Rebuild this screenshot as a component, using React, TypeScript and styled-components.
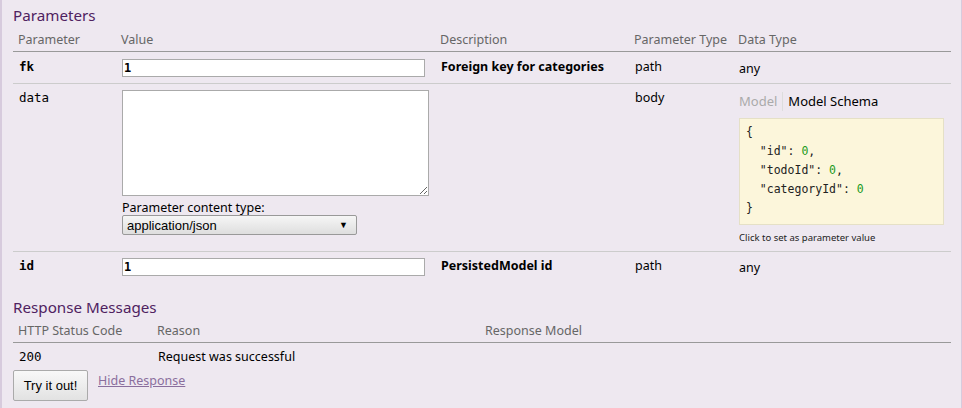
import React from "react";
import styled, { createGlobalStyle } from "styled-components";

const Global = createGlobalStyle`
  html, body { margin: 0; padding: 0; }
  body {
    background: #eee8f0;
    font-family: "Noto Sans", "Open Sans", sans-serif;
    font-size: 12.5px;
    color: #000;
  }
`;

const Panel = styled.div`
  box-sizing: border-box;
  width: 962px;
  height: 408px;
  border-left: 2px solid #d7cbdd;
  border-right: 1px solid #d7cbdd;
  padding: 4px 10px 0 11px;
  overflow: hidden;
`;

const Heading = styled.h4`
  margin: 0;
  font-size: 15.2px;
  font-weight: 400;
  color: #4f2260;
  line-height: 22px;
`;

const Table = styled.table`
  width: 100%;
  border-collapse: collapse;
  table-layout: fixed;
`;

const Th = styled.th<{ $w?: number; $top?: number }>`
  box-sizing: border-box;
  ${(p) => (p.$w ? `width: ${p.$w}px;` : "")}
  text-align: left;
  font-weight: 400;
  color: #666;
  font-size: 12.5px;
  white-space: nowrap;
  padding: ${(p) => p.$top ?? 5}px 0 3px 5px;
  border-bottom: 1px solid #999;
  line-height: 17px;
`;

const Td = styled.td<{ $bold?: boolean; $last?: boolean; $pad?: number }>`
  vertical-align: top;
  padding: ${(p) => p.$pad ?? 6}px 6px 6px 6px;
  line-height: 15px;
  font-size: 12.5px;
  white-space: nowrap;
  font-weight: ${(p) => (p.$bold ? 700 : 400)};
  border-bottom: ${(p) => (p.$last ? "none" : "1px solid #ccc")};
`;

const MonoName = styled.span<{ $bold?: boolean }>`
  font-family: "DejaVu Sans Mono", "Liberation Mono", monospace;
  font-size: 12.5px;
  font-weight: ${(p) => (p.$bold ? 700 : 400)};
`;

const Lowered = styled.span`
  display: inline-block;
  padding-top: 2px;
`;

const TextInput = styled.input`
  box-sizing: border-box;
  display: block;
  width: 303px;
  height: 18px;
  margin: 0;
  border: 1px solid #aaa;
  background: #fff;
  padding: 0 0 0 1px;
  font-family: "DejaVu Sans Mono", monospace;
  font-weight: 700;
  font-size: 12px;
  color: #000;
  outline: none;
`;

const TextArea = styled.textarea`
  box-sizing: border-box;
  display: block;
  width: 307px;
  height: 106px;
  margin: 0;
  border: 1px solid #aaa;
  background: #fff;
  resize: both;
  outline: none;
`;

const Label = styled.div`
  font-size: 12.5px;
  line-height: 14px;
  margin-top: 5px;
`;

const Select = styled.div`
  box-sizing: border-box;
  width: 235px;
  height: 20px;
  border: 1px solid #999;
  border-radius: 2px;
  background: linear-gradient(#f6f6f6, #dedede);
  display: flex;
  align-items: center;
  justify-content: space-between;
  padding: 0 8px 0 4px;
  font-family: "Liberation Sans", Arial, sans-serif;
  font-size: 13px;
`;

const Arrow = styled.span`
  font-size: 9px;
`;

const Tabs = styled.div`
  display: flex;
  align-items: center;
  margin-top: 2px;
  font-size: 13px;
`;

const Tab = styled.span<{ $active?: boolean }>`
  color: ${(p) => (p.$active ? "#000" : "#aaa")};
  padding: ${(p) => (p.$active ? "0 0 0 5px" : "0 5px 0 0")};
  line-height: 19px;
  ${(p) => (!p.$active ? "border-right: 1px solid #ddd;" : "")}
`;

const Snippet = styled.pre`
  box-sizing: border-box;
  width: 205px;
  margin: 7px 0 0 0;
  background: #fcf6db;
  border: 1px solid #e5e0c6;
  padding: 4px 6px 6px 6px;
  font-family: "DejaVu Sans Mono", monospace;
  font-size: 11.5px;
  line-height: 19px;
  color: #222;
`;

const Num = styled.span`
  color: #1b9a1b;
`;

const Hint = styled.div`
  font-size: 9.5px;
  line-height: 14px;
  margin-top: 6px;
  color: #222;
`;

const SecondHeading = styled(Heading)`
  margin-top: 14px;
`;

const Actions = styled.div`
  display: flex;
  align-items: flex-start;
  gap: 10px;
`;

const Button = styled.button`
  box-sizing: border-box;
  width: 75px;
  height: 31px;
  margin: 0;
  border: 1px solid #aaa;
  border-radius: 2px;
  background: linear-gradient(#f8f8f8, #e2e2e2);
  font-family: "Liberation Sans", Arial, sans-serif;
  font-size: 13px;
  color: #000;
  padding: 0;
`;

const Link = styled.a`
  color: #8a6e9d;
  text-decoration: underline;
  font-size: 12.5px;
  line-height: 16px;
  margin-top: 3px;
`;

export default function App() {
  return (
    <>
      <Global />
      <Panel>
        <Heading>Parameters</Heading>
        <Table>
          <thead>
            <tr>
              <Th $w={103}>Parameter</Th>
              <Th $w={319}>Value</Th>
              <Th $w={194}>Description</Th>
              <Th $w={104}>Parameter Type</Th>
              <Th>Data Type</Th>
            </tr>
          </thead>
          <tbody>
            <tr>
              <Td $pad={7}><MonoName $bold>fk</MonoName></Td>
              <Td $pad={7}><TextInput defaultValue="1" /></Td>
              <Td $pad={7} $bold>Foreign key for categories</Td>
              <Td $pad={7}>path</Td>
              <Td $pad={7}><Lowered>any</Lowered></Td>
            </tr>
            <tr>
              <Td><MonoName>data</MonoName></Td>
              <Td>
                <TextArea />
                <Label>Parameter content type:</Label>
                <Select>
                  <span>application/json</span>
                  <Arrow>▼</Arrow>
                </Select>
              </Td>
              <Td></Td>
              <Td>body</Td>
              <Td>
                <Tabs>
                  <Tab>Model</Tab>
                  <Tab $active>Model Schema</Tab>
                </Tabs>
                <Snippet>
                  {"{\n  \"id\": "}<Num>0</Num>{",\n  \"todoId\": "}<Num>0</Num>{",\n  \"categoryId\": "}<Num>0</Num>{"\n}"}
                </Snippet>
                <Hint>Click to set as parameter value</Hint>
              </Td>
            </tr>
            <tr>
              <Td $last><MonoName $bold>id</MonoName></Td>
              <Td $last><TextInput defaultValue="1" /></Td>
              <Td $last $bold>PersistedModel id</Td>
              <Td $last>path</Td>
              <Td $last><Lowered>any</Lowered></Td>
            </tr>
          </tbody>
        </Table>
        <SecondHeading>Response Messages</SecondHeading>
        <Table>
          <thead>
            <tr>
              <Th $w={139} $top={4}>HTTP Status Code</Th>
              <Th $w={328} $top={4}>Reason</Th>
              <Th $top={4}>Response Model</Th>
            </tr>
          </thead>
          <tbody>
            <tr>
              <Td $last $pad={6}><MonoName>200</MonoName></Td>
              <Td $last $pad={6}>Request was successful</Td>
              <Td $last $pad={6}></Td>
            </tr>
          </tbody>
        </Table>
        <Actions>
          <Button>Try it out!</Button>
          <Link href="#">Hide Response</Link>
        </Actions>
      </Panel>
    </>
  );
}
